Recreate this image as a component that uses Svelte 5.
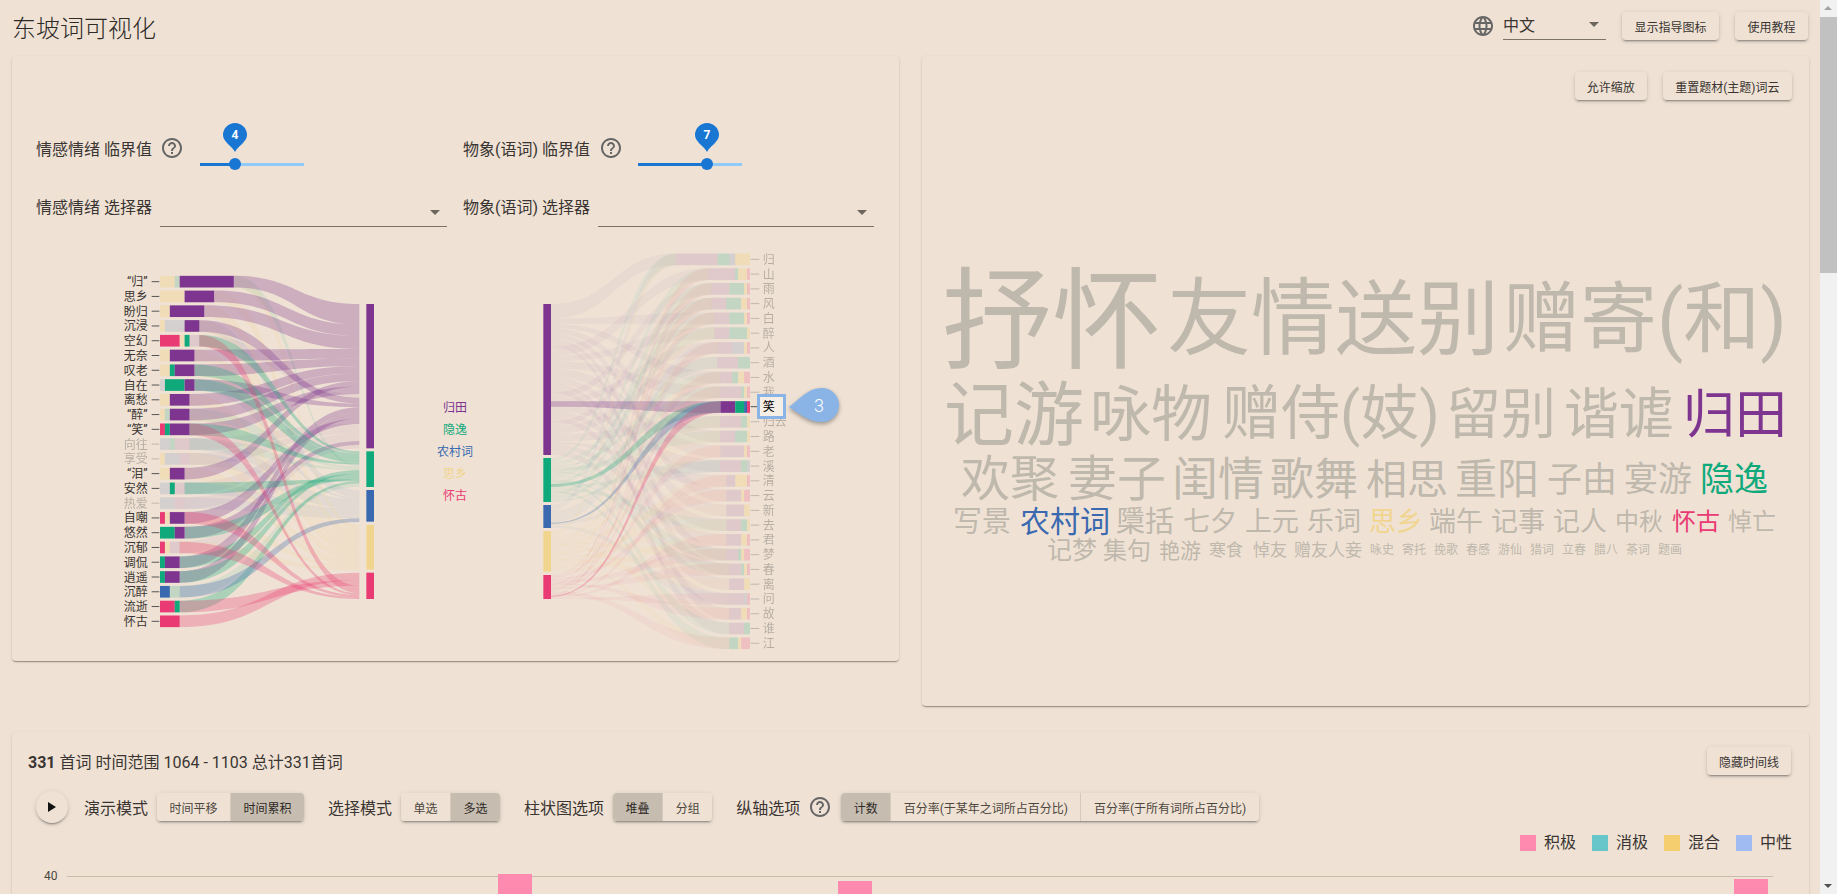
<script>
const COL = { p: '#7d3590', g: '#0fa97b', b: '#3a69b0', y: '#f1d58e', k: '#ea3a73' };
const FADE_BAR = { p: 0.14, g: 0.2, b: 0.15, y: 0.42, k: 0.2 };
const FADE_LEFT = { p: 0.07, g: 0.09, b: 0.07, y: 0.16, k: 0.09 };
const FADE_RIGHT = { p: 0.045, g: 0.055, b: 0.045, y: 0.09, k: 0.055 };
const zx = (z) => 100 + z / 3;
const zy = (z) => 250 + z / 3;
const rx = (z) => 520 + z / 3;
const ry = (z) => 240 + z / 3;

function parse(s) {
  return s.split(' ').map((t) => {
    const c = t[0];
    return { key: c.toLowerCase(), solid: c !== c.toLowerCase(), n: +t.slice(1) };
  });
}
function ribbon(x0, a0, a1, x1, b0, b1) {
  const m = (x0 + x1) / 2;
  return `M${x0} ${a0}C${m} ${a0} ${m} ${b0} ${x1} ${b0}L${x1} ${b1}C${m} ${b1} ${m} ${a1} ${x0} ${a1}Z`;
}

/* ---- left sankey, measured in reference units ---- */
const leftRows = [
  ['“归”', 'y3 g1 P11'], ['思乡', 'y5 P6'], ['盼归', 'y2 P7'], ['沉浸', 'y1 b4 P3'],
  ['空幻', 'K4 y1 G1 p2'], ['无奈', 'y2 P5'], ['叹老', 'y2 G1 P4'], ['自在', 'b1 G4 P2'],
  ['离愁', 'y2 P4'], ['“醉”', 'y1 g1 P4'], ['“笑”', 'K1 G1 P4'], ['向往', 'b2 g1 p3', 1],
  ['享受', 'y1 b3 p2', 1], ['“泪”', 'y2 P3'], ['安然', 'b2 G1 p2'], ['热爱', 'b3 p2', 1],
  ['自嘲', 'K1 y1 P3'], ['悠然', 'G3 P2'], ['沉郁', 'K1 y1 p2'], ['调侃', 'G1 P3'],
  ['逍遥', 'G1 P3'], ['沉醉', 'B2 g2'], ['流逝', 'K3 G1'], ['怀古', 'K4']
];
const leftBands = {
  p: { a: 162, b: 595, order: [1,2,3,6,7,9,10,14,11,5,4,8,20,21,17,12,13,15,16,18,19] },
  g: { a: 604, b: 711, order: [5,7,8,11,1,10,12,20,21,18,15,23,22] },
  b: { a: 720, b: 815, order: [4,8,12,13,15,16,22] },
  y: { a: 825, b: 959, order: [1,2,3,4,5,6,7,9,10,13,14,17,19] },
  k: { a: 968, b: 1047, order: [24,23,5,11,17,19] }
};
const LU = 14.76;
const left = leftRows.map((r, i) => {
  const cy = 95 + i * 44.3;
  let x = 180;
  const segs = parse(r[1]).map((s) => {
    const o = { ...s, x: zx(x), w: (s.n * LU) / 3 };
    x += s.n * LU;
    return o;
  });
  return { name: r[0], faded: r[2], cy, end: x, segs };
});
const leftLinks = [];
for (const k of Object.keys(leftBands)) {
  const band = leftBands[k];
  let y = band.a;
  for (const idx of band.order) {
    const row = left[idx - 1];
    const s = row.segs.find((q) => q.key === k);
    if (!s) continue;
    const t = s.n * 5.63;
    leftLinks.push({
      key: k, solid: s.solid,
      d: ribbon(zx(row.end), zy(row.cy - 17.5), zy(row.cy + 17.5), zx(778), zy(y), zy(y + t))
    });
    y += t;
  }
}
leftLinks.sort((a, b) => a.solid - b.solid);
const leftNodes = Object.keys(leftBands).map((k) => ({
  key: k, x: zx(799), w: 23 / 3, y: zy(leftBands[k].a), h: (leftBands[k].b - leftBands[k].a) / 3
}));
const legend = [['归田', 'p', 407], ['隐逸', 'g', 429], ['农村词', 'b', 451], ['思乡', 'y', 473], ['怀古', 'k', 495]];

/* ---- right sankey ---- */
const rightRows = [
  ['归', 'p14 g4 b2 y5'], ['山', 'p9 g1 y3 k1'], ['雨', 'p6 g5 y1 k1'], ['风', 'p5 g5 y2 k1'],
  ['白', 'p5 g5 y1 k1'], ['醉', 'p5 g6 y1'], ['人', 'p5 b4 y1 k1'], ['酒', 'p7 g4'],
  ['水', 'p4 g2 y2 k2'], ['我', 'p7 g1 y1 k1'], ['笑', 'P5 G3 B1 K1'], ['归去', 'p7 g2 y1'],
  ['路', 'p5 g4 y1'], ['老', 'p8 y1 k1'], ['溪', 'p7 g2 b1'], ['清', 'p3 y4 k1'],
  ['云', 'p5 y1 k2'], ['新', 'p6 y2'], ['去', 'p5 g2 y1'], ['君', 'p5 y2 k1'],
  ['梦', 'p4 g1 y1 k2'], ['春', 'p4 g1 y1 k1'], ['离', 'p5 y2'], ['问', 'p5 b1 k1'],
  ['故', 'p4 y2 k1'], ['谁', 'p5 g2'], ['江', 'g3 y1 k3']
];
const rightBands = {
  p: [192, 645, [484, 500]], g: [654, 786, [732, 741]], b: [795, 864, [848, 851]],
  y: [873, 995, null], k: [1005, 1077, [1067, 1070]]
};
const RU = 8.87;
const right = rightRows.map((r, i) => {
  const cy = 58 + i * 44.3;
  const parts = parse(r[1]);
  const total = parts.reduce((a, s) => a + s.n, 0);
  const start = 690 - total * RU;
  let x = start;
  const segs = parts.map((s) => {
    const o = { ...s, x: rx(x), w: (s.n * RU) / 3 };
    x += s.n * RU;
    return o;
  });
  return { name: r[0], cy, start, segs, hot: r[0] === '笑' };
});
const rightLinks = [];
for (const k of Object.keys(rightBands)) {
  const [a, b, hot] = rightBands[k];
  const rows = right
    .map((row, i) => ({ row, i, s: row.segs.find((q) => q.key === k) }))
    .filter((e) => e.s && !e.row.hot)
    .sort((u, v) => ((u.i * 7) % 27) - ((v.i * 7) % 27));
  const sum = rows.reduce((t, e) => t + e.s.n, 0);
  let y = a;
  for (const e of rows) {
    const t = (e.s.n * (b - a)) / sum;
    rightLinks.push({
      key: k, solid: false,
      d: ribbon(rx(93), ry(y), ry(y + t), rx(e.row.start), ry(e.row.cy - 17.5), ry(e.row.cy + 17.5))
    });
    y += t;
  }
  if (hot) {
    const row = right[10];
    rightLinks.push({
      key: k, solid: true,
      d: ribbon(rx(93), ry(hot[0]), ry(hot[1]), rx(row.start), ry(row.cy - 17.5), ry(row.cy + 17.5))
    });
  }
}
const rightNodes = Object.keys(rightBands).map((k) => ({
  key: k, x: rx(70), w: 23 / 3, y: ry(rightBands[k][0]), h: (rightBands[k][1] - rightBands[k][0]) / 3
}));

/* ---- word cloud: [text, x, baseline, size, color key] ---- */
const words = [
  ['抒怀', 942, 360, 110], ['友情', 1167, 348, 84], ['送别', 1335, 348, 82], ['赠寄(和)', 1503, 346, 77],
  ['记游', 944, 440, 70], ['咏物', 1090, 436, 61], ['赠侍(妓)', 1222, 434, 59], ['留别', 1446, 433, 55], ['谐谑', 1564, 433, 55], ['归田', 1683, 433, 52, 'p'],
  ['欢聚', 961, 496, 49], ['妻子', 1068, 496, 49], ['闺情', 1172, 495, 46], ['歌舞', 1270, 495, 44], ['相思', 1366, 494, 41], ['重阳', 1455, 494, 42], ['子由', 1547, 492, 35], ['宴游', 1624, 491, 34], ['隐逸', 1700, 491, 34, 'g'],
  ['写景', 953, 532, 29], ['农村词', 1020, 532, 30, 'b'], ['檃括', 1116, 532, 29], ['七夕', 1183, 531, 27], ['上元', 1245, 531, 27], ['乐词', 1307, 531, 27], ['思乡', 1369, 531, 27, 'y'], ['端午', 1429, 531, 27], ['记事', 1491, 531, 27], ['记人', 1553, 531, 27], ['中秋', 1615, 530, 24], ['怀古', 1672, 530, 24, 'k'], ['悼亡', 1728, 530, 24],
  ['记梦', 1047, 559, 25], ['集句', 1103, 559, 24], ['艳游', 1159, 558, 21], ['寒食', 1209, 556, 17], ['悼友', 1253, 556, 17], ['赠友人妾', 1294, 556, 17],
  ['咏史', 1370, 554, 12], ['寄托', 1402, 554, 12], ['挽歌', 1434, 554, 12], ['春感', 1466, 554, 12], ['游仙', 1498, 554, 12], ['猎词', 1530, 554, 12], ['立春', 1562, 554, 12], ['腊八', 1594, 554, 12], ['茶词', 1626, 554, 12], ['题画', 1658, 554, 12]
];

const help = 'M11 18h2v-2h-2v2zm1-16C6.48 2 2 6.48 2 12s4.48 10 10 10 10-4.48 10-10S17.52 2 12 2zm0 18c-4.41 0-8-3.59-8-8s3.59-8 8-8 8 3.59 8 8-3.59 8-8 8zm0-14c-2.21 0-4 1.79-4 4h2c0-1.1.9-2 2-2s2 .9 2 2c0 2-3 1.75-3 5h2c0-2.25 3-2.5 3-5 0-2.21-1.79-4-4-4z';
const globe = 'M11.99 2C6.47 2 2 6.48 2 12s4.47 10 9.99 10C17.52 22 22 17.52 22 12S17.52 2 11.99 2zm6.93 6h-2.95c-.32-1.25-.78-2.45-1.38-3.56 1.84.63 3.37 1.91 4.33 3.56zM12 4.04c.83 1.2 1.48 2.53 1.91 3.96h-3.82c.43-1.43 1.08-2.76 1.91-3.96zM4.26 14C4.1 13.36 4 12.69 4 12s.1-1.36.26-2h3.38c-.08.66-.14 1.32-.14 2 0 .68.06 1.34.14 2H4.26zm.82 2h2.95c.32 1.25.78 2.45 1.38 3.56-1.84-.63-3.37-1.9-4.33-3.56zm2.95-8H5.08c.96-1.66 2.49-2.93 4.33-3.56C8.81 5.55 8.35 6.75 8.03 8zM12 19.96c-.83-1.2-1.48-2.53-1.91-3.96h3.82c-.43 1.43-1.08 2.76-1.91 3.96zM14.34 14H9.66c-.09-.66-.16-1.32-.16-2 0-.68.07-1.35.16-2h4.68c.09.65.16 1.32.16 2 0 .68-.07 1.34-.16 2zm.25 5.56c.6-1.11 1.06-2.31 1.38-3.56h2.95c-.96 1.65-2.49 2.93-4.33 3.56zM16.36 14c.08-.66.14-1.32.14-2 0-.68-.06-1.34-.14-2h3.38c.16.64.26 1.31.26 2s-.1 1.36-.26 2h-3.38z';

const sliders = [
  { label: '情感情绪 临界值', value: 4, pos: 33.4, icon: 'i1' },
  { label: '物象(语词) 临界值', value: 7, pos: 66.4, icon: 'i2' }
];
const selects = [
  { label: '情感情绪 选择器', cls: 'u1' },
  { label: '物象(语词) 选择器', cls: 'u2' }
];
const groups = [
  { label: '演示模式', items: [['时间平移', 0], ['时间累积', 1]] },
  { label: '选择模式', items: [['单选', 0], ['多选', 1]] },
  { label: '柱状图选项', items: [['堆叠', 1], ['分组', 0]] },
  { label: '纵轴选项', help: true, items: [['计数', 1], ['百分率(于某年之词所占百分比)', 0], ['百分率(于所有词所占百分比)', 0]] }
];
const series = [['积极', '#ff8ab0'], ['消极', '#66c6c9'], ['混合', '#f5cf6f'], ['中性', '#9fbbf2']];
const bars = [[498, 874], [838, 881], [1734, 879]];
</script>

<div class="root">
  <main class="page">
    <header class="top">
      <h1>东坡词可视化</h1>
      <svg class="ico globe" viewBox="0 0 24 24"><path d={globe} /></svg>
      <div class="lang"><span>中文</span><i class="caret"></i></div>
      <button class="btn gap">显示指导图标</button>
      <button class="btn gap">使用教程</button>
    </header>

    <div class="panels">
      <section class="card leftcard">
        <div class="controls">
          {#each sliders as s}
            <div class="ctl">
              <span class="lbl">{s.label}</span>
              <svg class="ico help {s.icon}" viewBox="0 0 24 24"><path d={help} /></svg>
              <div class="slider {s.icon}">
                <div class="track"><div class="fill" style="width:{s.pos}%"></div></div>
                <div class="thumb" style="left:{s.pos}%">
                  <svg class="pin" viewBox="0 0 24 29" width="24" height="29">
                    <path d="M12 29C9 23 0 19 0 12a12 12 0 0 1 24 0c0 7-9 11-12 17z" fill="#1976d2" />
                    <text x="12" y="16" text-anchor="middle" class="pintext">{s.value}</text>
                  </svg>
                </div>
              </div>
            </div>
          {/each}
          {#each selects as s}
            <div class="ctl">
              <span class="lbl sel">{s.label}</span>
              <div class="under {s.cls}"><i class="caret"></i></div>
            </div>
          {/each}
        </div>
        <svg class="sankey" viewBox="12 240 887 421" width="887" height="421">
          {#each leftLinks as l}
            <path d={l.d} fill={COL[l.key]} opacity={l.solid ? 0.3 : FADE_LEFT[l.key]} />
          {/each}
          {#each left as r}
            <g opacity={r.faded ? 0.3 : 1}>
              <text x={zx(143)} y={zy(r.cy) + 4.5} text-anchor="end" class="tick">{r.name}</text>
              <line x1={zx(155)} x2={zx(178)} y1={zy(r.cy)} y2={zy(r.cy)} stroke="#555" />
            </g>
            {#each r.segs as s}
              <rect x={s.x} y={zy(r.cy - 17.5)} width={s.w} height={35 / 3} fill={COL[s.key]} opacity={s.solid ? 1 : FADE_BAR[s.key]} />
            {/each}
          {/each}
          {#each leftNodes as n}
            <rect x={n.x} y={n.y} width={n.w} height={n.h} fill={COL[n.key]} />
          {/each}
          {#each legend as l}
            <text x="455" y={l[2] + 4.5} text-anchor="middle" font-size="12" fill={COL[l[1]]}>{l[0]}</text>
          {/each}

          {#each rightLinks as l}
            <path d={l.d} fill={COL[l.key]} opacity={l.solid ? 0.3 : FADE_RIGHT[l.key]} />
          {/each}
          {#each right as r}
            {#if !r.hot}
              <line x1={rx(692)} x2={rx(718)} y1={ry(r.cy)} y2={ry(r.cy)} stroke="#555" opacity="0.3" />
              <text x={rx(728)} y={ry(r.cy) + 4.5} class="tick" opacity="0.3">{r.name}</text>
            {/if}
            {#each r.segs as s}
              <rect x={s.x} y={ry(r.cy - 17.5)} width={s.w} height={35 / 3} fill={COL[s.key]} opacity={s.solid ? 1 : FADE_BAR[s.key]} />
            {/each}
          {/each}
          {#each rightNodes as n}
            <rect x={n.x} y={n.y} width={n.w} height={n.h} fill={COL[n.key]} />
          {/each}
          <line x1={rx(692)} x2={rx(718)} y1="406.7" y2="406.7" stroke="#555" />
          <rect x="758.5" y="395.5" width="26" height="22" fill="#f6efe6" stroke="#8ab3e6" stroke-width="3" />
          <text x={rx(728)} y="411" class="tick hot">笑</text>
          <path class="drop" d="M789 407C800 399 808 388 822 388a17 17 0 0 1 0 34C808 422 800 414 789 407Z" fill="#8ab3e6" />
          <text x="819" y="412" text-anchor="middle" class="drop-num">3</text>
        </svg>
      </section>

      <section class="card rightcard">
        <div class="cardbtns">
          <button class="btn">允许缩放</button>
          <button class="btn gap wide">重置题材(主题)词云</button>
        </div>
        <svg class="cloud" viewBox="922 100 887 606" width="887" height="606">
          {#each words as w}
            <text x={w[1]} y={w[2]} font-size={w[3]} fill={w[4] ? COL[w[4]] : '#bfb8ac'}>{w[0]}</text>
          {/each}
        </svg>
      </section>
    </div>

    <section class="card timeline">
      <div class="tl-head">
        <span class="summary"><b>331</b> 首词 时间范围 1064 - 1103 总计331首词</span>
        <button class="btn">隐藏时间线</button>
      </div>
      <div class="tl-controls">
        <button class="play" aria-label="播放"><svg viewBox="0 0 8 10" width="8" height="10"><path d="M0 0l8 5-8 5z" fill="#111" /></svg></button>
        {#each groups as g}
          <span class="lbl group-label">{g.label}</span>
          {#if g.help}
            <svg class="ico help" viewBox="0 0 24 24"><path d={help} /></svg>
          {/if}
          <div class="toggle">
            {#each g.items as it}
              <button class:on={it[1]}>{it[0]}</button>
            {/each}
          </div>
        {/each}
      </div>
      <div class="legend">
        {#each series as s}
          <span class="key"><i style="background:{s[1]}"></i>{s[0]}</span>
        {/each}
      </div>
      <svg class="chart" viewBox="12 851 1797 120" width="1797" height="120">
        <text x="44" y="880" class="axis">40</text>
        <line x1="67" x2="1773" y1="876.5" y2="876.5" stroke="#c9bcab" />
        {#each bars as b}
          <rect x={b[0]} y={b[1]} width="34" height="90" fill="#ff8ab0" />
        {/each}
      </svg>
    </section>
  </main>

  <div class="scrollbar">
    <span class="arr up"></span>
    <div class="sb-track"><div class="sb-thumb"></div></div>
    <span class="arr down"></span>
  </div>
</div>

<style>
  :global(body) {
    margin: 0;
    background: #efe2d5;
    overflow: hidden;
  }
  .root {
    display: flex;
    height: 894px;
    overflow: hidden;
    font-family: Roboto, "Noto Sans CJK SC", sans-serif;
    font-weight: 400;
    color: #3a3532;
  }
  .page {
    width: 1820px;
    height: 894px;
    overflow: hidden;
    flex: none;
    box-sizing: border-box;
    padding: 0 11px 0 12px;
  }
  .top {
    display: flex;
    align-items: center;
    height: 56px;
    padding: 0 1px 4px 0;
    box-sizing: border-box;
  }
  h1 {
    margin: 0;
    font-size: 24px;
    font-weight: 300;
    flex: 1;
    color: #2e2a27;
  }
  .ico { width: 24px; height: 24px; fill: #666; flex: none; display: block; }
  .lang {
    width: 103px;
    height: 28px;
    margin: 0 0 0 8px;
    box-sizing: border-box;
    border-bottom: 1px solid #7d7468;
    position: relative;
    font-size: 16px;
    line-height: 28px;
  }
  .caret {
    position: absolute;
    right: 7px;
    top: 10px;
    width: 0;
    height: 0;
    border-left: 5px solid transparent;
    border-right: 5px solid transparent;
    border-top: 5px solid #6d665e;
  }
  .btn {
    height: 28px;
    padding: 0 12px;
    border: 0;
    border-radius: 4px;
    font: inherit;
    font-size: 12px;
    color: inherit;
    background: #efe2d5;
    white-space: nowrap;
    box-shadow: 0 3px 1px -2px rgba(0,0,0,.2), 0 2px 2px rgba(0,0,0,.14), 0 1px 5px rgba(0,0,0,.12);
  }
  .btn.gap { margin-left: 16px; }
  .top .btn { padding: 0 12.5px; }
  .btn.wide { padding: 0 12.5px; }
  .panels {
    display: grid;
    grid-template-columns: 887px 887px;
    column-gap: 23px;
    align-items: start;
  }
  .card {
    background: #efe2d5;
    border-radius: 4px;
    box-shadow: 0 2px 1px -1px rgba(0,0,0,.2), 0 1px 1px rgba(0,0,0,.14), 0 1px 3px rgba(0,0,0,.12);
  }
  .leftcard { height: 605px; }
  .rightcard { height: 650px; }
  .controls {
    display: grid;
    grid-template-columns: 411px 412px;
    grid-auto-rows: 40px;
    column-gap: 16px;
    row-gap: 20px;
    height: 184px;
    box-sizing: border-box;
    padding: 72px 0 0 24px;
  }
  .ctl { display: flex; align-items: center; height: 40px; font-size: 16px; }
  .lbl { font-size: 16px; white-space: nowrap; flex: none; }
  .lbl.sel { align-self: flex-start; padding-top: 8px; line-height: 24px; }
  .help { margin-left: 8px; }
  .help.i2 { margin-left: 9px; }
  .slider {
    position: relative;
    width: 104px;
    height: 8px;
    align-self: flex-end;
    margin-left: 16px;
    margin-bottom: 0;
  }
  .slider.i2 { margin-left: 15px; }
  .track {
    position: absolute;
    left: 0;
    right: 0;
    top: 3px;
    height: 3px;
    background: #90caf9;
  }
  .fill { height: 100%; background: #1976d2; }
  .thumb {
    position: absolute;
    top: -2px;
    width: 12px;
    height: 12px;
    margin-left: -6px;
    border-radius: 50%;
    background: #1976d2;
  }
  .pin { position: absolute; left: -6px; top: -35px; overflow: visible; }
  .pintext { fill: #fff; font-size: 12px; font-weight: 700; }
  .under {
    position: relative;
    height: 39px;
    align-self: flex-start;
    box-sizing: border-box;
    border-bottom: 1px solid #7d7468;
  }
  .u1 { width: 287px; margin-left: 8px; }
  .u2 { width: 276px; margin-left: 8px; }
  .under .caret { top: 22px; }
  .sankey, .cloud, .chart { display: block; }
  .tick { font-size: 12px; fill: #3a3532; }
  .hot { fill: #000; }
  .drop { filter: drop-shadow(0 2px 2px rgba(0,0,0,.35)); }
  .drop-num { font-size: 18px; fill: #fff; font-weight: 300; }
  .cardbtns {
    display: flex;
    justify-content: flex-end;
    padding: 16px 17px 0 0;
    height: 44px;
    box-sizing: border-box;
  }
  .timeline { margin-top: 26px; }
  .tl-head {
    display: flex;
    justify-content: space-between;
    align-items: center;
    padding: 15px 18px 0 16px;
  }
  .summary { font-size: 16px; }
  .summary b { font-weight: 700; }
  .tl-controls {
    display: flex;
    align-items: center;
    height: 32px;
    margin-top: 16px;
    padding-left: 24px;
  }
  .play {
    width: 32px;
    height: 32px;
    padding: 0;
    border: 0;
    border-radius: 50%;
    background: #efe2d5;
    display: flex;
    align-items: center;
    justify-content: center;
    box-shadow: 0 3px 1px -2px rgba(0,0,0,.2), 0 2px 2px rgba(0,0,0,.14), 0 1px 5px rgba(0,0,0,.12);
    flex: none;
  }
  .group-label { margin-left: 24px; }
  .play + .group-label { margin-left: 16px; }
  .toggle {
    display: flex;
    margin-left: 9px;
    height: 28px;
    border-radius: 4px;
    box-shadow: 0 3px 1px -2px rgba(0,0,0,.2), 0 2px 2px rgba(0,0,0,.14), 0 1px 5px rgba(0,0,0,.12);
    flex: none;
  }
  .toggle button {
    height: 28px;
    padding: 0 12.5px;
    border: 0;
    background: #efe2d5;
    font: inherit;
    font-size: 12px;
    color: #4d4740;
    white-space: nowrap;
    border-left: 1px solid #d6cabc;
  }
  .toggle button:first-child { border-left: 0; border-radius: 4px 0 0 4px; }
  .toggle button:last-child { border-radius: 0 4px 4px 0; }
  .toggle button.on { background: #c6bdb0; color: #2e2a27; }
  .legend {
    display: flex;
    justify-content: flex-end;
    gap: 16px;
    margin-top: 12px;
    padding-right: 17px;
    height: 16px;
  }
  .key {
    display: flex;
    align-items: center;
    gap: 8px;
    font-size: 16px;
    line-height: 16px;
  }
  .key i { width: 16px; height: 16px; display: block; }
  .axis { font-size: 12px; fill: #4d4740; }
  .scrollbar {
    width: 17px;
    flex: none;
    background: #f1f1f1;
    display: flex;
    flex-direction: column;
    height: 894px;
    position: relative;
  }
  .sb-track { flex: 1; }
  .sb-thumb { height: 256px; background: #c1c1c1; }
  .arr {
    height: 17px;
    flex: none;
    position: relative;
    display: block;
  }
  .arr::after {
    content: "";
    position: absolute;
    left: 4px;
    border-left: 4px solid transparent;
    border-right: 4px solid transparent;
  }
  .up::after { top: 6px; border-bottom: 4px solid #a3a3a3; }
  .down::after { top: 7px; border-top: 4px solid #505050; }
</style>
